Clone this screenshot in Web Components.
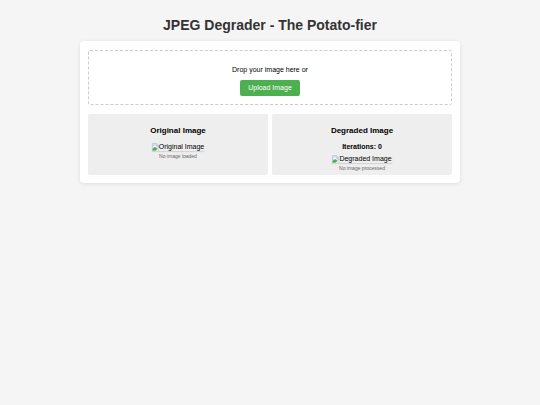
<!DOCTYPE html>
<html lang="en">
<head>
  <meta charset="UTF-8">
  <meta name="viewport" content="width=device-width, initial-scale=1.0">
  <title>JPEG Degrader - The Potato-fier</title>
  <style>
    body {
      margin: 0;
      background: #f5f5f5;
      color: #000;
      font: 7px/8px "Liberation Sans", Arial, sans-serif;
    }
  </style>
</head>
<body>
  <jd-app>
    <span slot="title">JPEG Degrader - The Potato-fier</span>
    <jd-drop-zone>Drop your image here or</jd-drop-zone>
    <jd-panel slot="panels" status="No image loaded">
      <span slot="heading">Original Image</span>
      <jd-preview>Original Image</jd-preview>
    </jd-panel>
    <jd-panel slot="panels" status="No image processed">
      <span slot="heading">Degraded Image</span>
      <jd-counter slot="counter" value="0"></jd-counter>
      <jd-preview>Degraded Image</jd-preview>
    </jd-panel>
  </jd-app>

  <script>
    class App extends HTMLElement {
      constructor() {
        super();
        this.attachShadow({ mode: 'open' });
        this.shadowRoot.innerHTML = `
          <style>
            :host {
              display: block;
              max-width: 380px;
              margin: 0 auto;
              padding: 17px 8px;
            }

            h1 {
              margin: 0 0 8px;
              color: #333;
              font-size: 14px;
              line-height: 16px;
              text-align: center;
            }

            main {
              display: flex;
              flex-direction: column;
              gap: 9px;
              padding: 9px 8px 8px;
              background: white;
              border-radius: 4px;
              box-shadow: 0 1px 4px rgba(0, 0, 0, 0.1);
            }

            #panels {
              display: grid;
              grid-template-columns: 1fr 1fr;
              gap: 4px;
            }
          </style>
          <h1><slot name="title"></slot></h1>
          <main>
            <slot></slot>
            <div id="panels"><slot name="panels"></slot></div>
          </main>
        `;
      }
    }

    class DropZone extends HTMLElement {
      constructor() {
        super();
        this.attachShadow({ mode: 'open' });
        this.shadowRoot.innerHTML = `
          <style>
            :host {
              display: flex;
              flex-direction: column;
              align-items: center;
              gap: 6px;
              padding: 15px 8px 8px;
              border: 1px dashed #ccc;
              border-radius: 2px;
            }

            p {
              margin: 0;
            }

            button {
              padding: 4px 8px;
              border: none;
              border-radius: 2px;
              background: #4caf50;
              color: white;
              font: inherit;
              cursor: pointer;
            }

            button:hover {
              background: #45a049;
            }
          </style>
          <p><slot></slot></p>
          <button type="button">Upload Image</button>
          <input type="file" accept="image/*" aria-label="Upload Image" hidden>
        `;
        const input = this.shadowRoot.querySelector('input');
        this.shadowRoot.querySelector('button').addEventListener('click', () => input.click());
      }
    }

    class Panel extends HTMLElement {
      constructor() {
        super();
        this.attachShadow({ mode: 'open' });
        this.shadowRoot.innerHTML = `
          <style>
            :host {
              display: flex;
              flex-direction: column;
              align-items: center;
              padding: 12px 4px 4px;
              background: #eee;
              border-radius: 2px;
              text-align: center;
            }

            h2 {
              margin: 0 0 8px;
              font-size: 8px;
              line-height: 9px;
            }

            #status {
              margin: 2px 0 0;
              color: #666;
              font-size: 5px;
              line-height: 6px;
            }
          </style>
          <h2><slot name="heading"></slot></h2>
          <slot name="counter"></slot>
          <slot></slot>
          <p id="status"></p>
        `;
        this.shadowRoot.querySelector('#status').textContent = this.getAttribute('status');
      }
    }

    class Counter extends HTMLElement {
      constructor() {
        super();
        this.attachShadow({ mode: 'open' });
        this.shadowRoot.innerHTML = `
          <style>
            :host {
              display: block;
              margin-bottom: 4px;
              font-weight: bold;
            }
          </style>
          Iterations: <span></span>
        `;
        this.shadowRoot.querySelector('span').textContent = this.getAttribute('value');
      }
    }

    class Preview extends HTMLElement {
      constructor() {
        super();
        this.attachShadow({ mode: 'open' });
        this.shadowRoot.innerHTML = `
          <style>
            :host {
              display: flex;
              align-items: flex-start;
              box-shadow: 0 1px 1px rgba(0, 0, 0, 0.1);
            }

            svg {
              width: 7px;
              height: 8px;
            }
          </style>
          <svg viewBox="0 0 14 16" aria-hidden="true">
            <path d="M1 1h8l4 4v10H1z" fill="#c6d9f5" stroke="#b4b8bd"/>
            <path d="M9 1v4h4z" fill="#fff" stroke="#b4b8bd"/>
            <path d="M3 7a2 2 0 0 1 4-1 2 2 0 0 1 2 3H3z" fill="#fff"/>
            <path d="M1 15v-3l5-4 5 4-4 3z" fill="#4cae48"/>
            <path d="M7 16l7-6v3l-3 3z" fill="#eee"/>
          </svg>
          <slot></slot>
        `;
      }
    }

    customElements.define('jd-app', App);
    customElements.define('jd-drop-zone', DropZone);
    customElements.define('jd-panel', Panel);
    customElements.define('jd-counter', Counter);
    customElements.define('jd-preview', Preview);
  </script>
</body>
</html>
